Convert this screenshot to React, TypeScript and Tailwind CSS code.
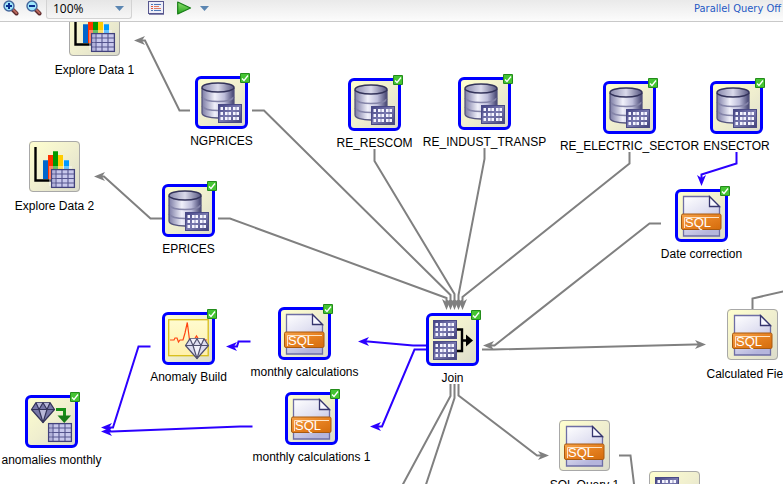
import React from "react";

type IconKind = "table" | "sql" | "explore" | "anomaly" | "create" | "join";

interface FlowNode {
  id: string;
  label?: string;
  icon: IconKind;
  x: number;
  y: number;
  selected?: boolean;
}

const nodes: FlowNode[] = [
  { id: "explore1", label: "Explore Data 1", icon: "explore", x: 69, y: -17 },
  { id: "explore2", label: "Explore Data 2", icon: "explore", x: 29, y: 119 },
  { id: "ngprices", label: "NGPRICES", icon: "table", x: 196, y: 55, selected: true },
  { id: "eprices", label: "EPRICES", icon: "table", x: 163, y: 163, selected: true },
  { id: "rescom", label: "RE_RESCOM", icon: "table", x: 349, y: 57, selected: true },
  { id: "indust", label: "RE_INDUST_TRANSP", icon: "table", x: 459, y: 56, selected: true },
  { id: "electric", label: "RE_ELECTRIC_SECTOR", icon: "table", x: 604, y: 60, selected: true },
  { id: "ensector", label: "ENSECTOR", icon: "table", x: 711, y: 60, selected: true },
  { id: "date", label: "Date correction", icon: "sql", x: 676, y: 168, selected: true },
  { id: "build", label: "Anomaly Build", icon: "anomaly", x: 163, y: 291, selected: true },
  { id: "monthly", label: "monthly calculations", icon: "sql", x: 279, y: 286, selected: true },
  { id: "monthly1", label: "monthly calculations 1", icon: "sql", x: 286, y: 371, selected: true },
  { id: "anomalies", label: "anomalies monthly", icon: "create", x: 26, y: 374, selected: true },
  { id: "join", label: "Join", icon: "join", x: 427, y: 292, selected: true },
  { id: "calculated", label: "Calculated Fields", icon: "sql", x: 727, y: 287 },
  { id: "query1", label: "SQL Query 1", icon: "sql", x: 559, y: 398 },
  { id: "join2", icon: "join", x: 649, y: 449 },
];

const grayEdges = [
  "M190 88.5H179.5L145 18.5H140",
  "M162 196.5H150.5L104 154.5H100",
  "M252 88.5H264L450.5 273V282",
  "M218 196.5H230L446.5 276V282",
  "M374.5 127V139L454.5 272V282",
  "M484.5 126V137L458.5 273V282",
  "M629.5 130V141.5L462.5 275V282",
  "M661 201.5H649.5L494.5 323.5H489",
  "M482 327.5H494L694 322.5H700",
  "M458.5 362V373.5L537 433.5H543",
];

const grayTails = [
  "M450.5 362V374L402 464",
  "M454.5 362V376L425.5 464",
  "M619 433.5H630.5L634 462",
  "M752.5 287V276.5L790 268",
];

const blueEdges = [
  "M736.5 130V141.5L701.5 152.5V158",
  "M426 323.5H413L368 319.5H364",
  "M426 327.5H414.5L382 404.5H376",
  "M250.5 319.5H238.5L237 324.5H232",
  "M150.5 324.5H138.5L113 405.5H107",
  "M252.5 404.5H240L112 409.5H107",
];

function Grid({ x, y, light = false }: { x: number; y: number; light?: boolean }) {
  if (light) {
    return (
      <g transform={`translate(${x} ${y})`}>
        <rect x="0.6" y="0.6" width="22.8" height="17.8" fill="#c8c8ec" stroke="#42427c" strokeWidth="1.3" />
        <path d="M5 1V18M11 1V18M17 1V18M1 5H23M1 9.5H23M1 14H23" stroke="#55558e" strokeWidth="1.1" />
        <path d="M3 1V18" stroke="#9090bd" strokeWidth="0.8" />
      </g>
    );
  }
  return (
    <g transform={`translate(${x} ${y})`}>
      <rect x="0.5" y="0.5" width="23" height="18" fill="url(#gridFill)" stroke="#4a4a86" />
      <g fill="#f5f5ff">
        {[3, 8, 13].map((top) => (
          <React.Fragment key={top}>
            <rect x="2.5" y={top} width="2.5" height="3" />
            <rect x="7" y={top} width="6" height="3" />
            <rect x="15" y={top} width="6" height="3" />
          </React.Fragment>
        ))}
      </g>
      <path d="M10 3V16M18 3V16" stroke="#6c6ca2" strokeWidth="0.8" />
    </g>
  );
}

function Diamond({ x, y, light = false }: { x: number; y: number; light?: boolean }) {
  const stroke = light ? "#50506e" : "#34345a";
  return (
    <g transform={`translate(${x} ${y})`} stroke={stroke} strokeLinejoin="round" strokeWidth="1.2">
      <path d="M5 .7H19L23.5 7.5L12 20.5L.5 7.5Z" fill={light ? "#dcdcf0" : "#7878a8"} />
      <path d="M5 .7L8 7.5L12 .7L16 7.5L19 .7M.5 7.5H23.5M8 7.5L12 20.5L16 7.5" fill={light ? "#f0f0fa" : "#b8b8d8"} />
    </g>
  );
}

function NodeIcon({ kind }: { kind: IconKind }) {
  return (
    <svg viewBox="0 0 51 51" className="block size-[51px]" aria-hidden="true">
      {kind === "table" && (
        <>
          <path d="M6 11V36C6 39 13 41 22 41S38 39 38 36V11Z" fill="url(#metal)" />
          <path d="M6 20C8 23 14 24.5 22 24.5S36 23 38 20M6 29C8 32 14 33.5 22 33.5" fill="none" stroke="#8484a8" strokeWidth="1.5" />
          <path d="M6 11V36C6 39 13 41 22 41S38 39 38 36V11" fill="none" stroke="#55557e" strokeWidth="1.3" />
          <ellipse cx="22" cy="10.5" rx="16" ry="4.5" fill="url(#lid)" stroke="#33335a" strokeWidth="1.5" />
          <Grid x={22} y={27} />
        </>
      )}
      {kind === "sql" && (
        <>
          <path d="M7.5 6.5H33.5L43.5 16.5V46H7.5Z" fill="url(#page)" stroke="#6e6ea5" strokeWidth="1.3" />
          <path d="M33.5 6.5V16.5H43.5Z" fill="#f8f8ff" stroke="#36366e" strokeWidth="1.3" />
          <rect x="5.5" y="24" width="39.5" height="15.5" rx="1.5" fill="url(#band)" stroke="#a85a10" />
          <path d="M8.5 38V27.5H43" fill="none" stroke="#ffe3c2" strokeWidth="1" />
          <text x="9" y="37" fill="#ffffff" className="font-['Liberation_Sans',sans-serif] text-[13px]">SQL</text>
        </>
      )}
      {kind === "explore" && (
        <>
          <path d="M14 19.3H19V38H14Z" fill="#0066cc" />
          <path d="M19 14H24V38H19Z" fill="#ff3300" />
          <path d="M24 10.3H29V38H24Z" fill="#009900" />
          <path d="M29 14H34V38H29Z" fill="#ffcc00" />
          <path d="M35 19.3H40V38H35Z" fill="#0099ff" />
          <path d="M6.5 6V39.5H23" fill="none" stroke="#000000" strokeWidth="2.4" />
          <path d="M20 25H43V28H22V45H20Z" fill="#ffffff" fillOpacity="0.4" />
          <Grid x={22} y={28} light />
        </>
      )}
      {kind === "anomaly" && (
        <>
          <rect x="5.7" y="6.7" width="39.5" height="36" fill="url(#plot)" stroke="#d8bd18" strokeWidth="1.3" />
          <path d="M7 27H11L12 25L14 25L15.5 29L17 27H20L22 20L24.3 9.5L26.5 27H31L33.5 23L36 27H44" fill="none" stroke="#ff4411" strokeWidth="1.2" />
          <Diamond x={22} y={25} light />
        </>
      )}
      {kind === "create" && (
        <>
          <Diamond x={5} y={6} />
          <path d="M30 13.5H38.5V20" fill="none" stroke="#169016" strokeWidth="3" />
          <path d="M31.5 19.5H45L38.3 27Z" fill="#167c16" />
          <Grid x={22} y={27} light />
        </>
      )}
      {kind === "join" && (
        <>
          <Grid x={6} y={6} />
          <Grid x={6} y={27} />
          <path d="M30 15.5H35V37H30M35 26.5H40" fill="none" stroke="#000000" strokeWidth="2.4" />
          <path d="M39 20.5L46 26.5L39 32.5Z" fill="#000000" />
        </>
      )}
    </svg>
  );
}

function DiagramNode({ node }: { node: FlowNode }) {
  return (
    <div className="absolute flex w-[51px] flex-col items-center" style={{ left: node.x, top: node.y }}>
      <div className="relative size-[51px]">
        <div className="size-[51px] overflow-hidden rounded-[4px] bg-linear-to-br from-[#ffffce] via-[#f0efcf] to-[#dbdbcb]">
          <NodeIcon kind={node.icon} />
        </div>
        <div
          className={
            node.selected
              ? "absolute -inset-px rounded-[6px] border-3 border-[#0000ff]"
              : "absolute inset-0 rounded-[4px] border border-[#a8a8a8]"
          }
        />
        {node.selected && (
          <svg viewBox="0 0 10 10" className="absolute -top-1 -right-[3px] size-[10px]" role="img" aria-label="Complete">
            <rect width="10" height="10" rx="1" fill="#238c1b" />
            <rect x="1" y="1" width="8" height="8" fill="#45c433" />
            <path d="M2 5.5L4 7.5L8 2.5" fill="none" stroke="#ffffff" strokeWidth="1.3" />
          </svg>
        )}
      </div>
      {node.label && (
        <span className={`text-[12px] leading-4 whitespace-nowrap ${node.selected ? "mt-[5px]" : "mt-[6px]"}`}>{node.label}</span>
      )}
    </div>
  );
}

function Magnifier({ plus }: { plus: boolean }) {
  return (
    <svg viewBox="0 0 16 16" className="block size-4" aria-hidden="true">
      <path d="M9.5 9.5L13.5 13.5" stroke="#5c2a2c" strokeWidth="4" strokeLinecap="round" />
      <path d="M10.5 10L13.5 13" stroke="#b8675c" strokeWidth="2" strokeLinecap="round" />
      <circle cx="6" cy="6" r="5" fill="#9fe6fa" stroke="#44669c" strokeWidth="1.4" />
      <path d={plus ? "M3 6H9M6 3V9" : "M3 6H9"} stroke="#0b2f90" strokeWidth="2" />
    </svg>
  );
}

function Caret() {
  return (
    <svg viewBox="0 0 9 5" className="block h-[5px] w-[9px]" aria-hidden="true">
      <path d="M0 0H9L4.5 5Z" fill="#5b86b2" />
    </svg>
  );
}

function Toolbar() {
  return (
    <header className="flex h-[22px] shrink-0 items-start border-b border-[#c9c9c9] bg-linear-to-b from-[#eaeaea] to-[#fcfcfc] pr-[2px] pl-[3px] font-['DejaVu_Sans_Condensed','DejaVu_Sans',sans-serif]">
      <button type="button" aria-label="Zoom in"><Magnifier plus /></button>
      <button type="button" aria-label="Zoom out" className="ml-[7px]"><Magnifier plus={false} /></button>
      <div className="relative ml-1 h-[19px] w-[86px]">
        <select
          aria-label="Zoom level"
          defaultValue="100%"
          className="block size-full appearance-none rounded-b-[3px] border border-t-0 border-[#d3d3d3] bg-linear-to-b from-[#e6e6e6] to-[#f6f6f6] pl-[6px] font-['Open_Sans',sans-serif] text-[12px] leading-4 text-black"
        >
          <option>50%</option>
          <option>100%</option>
          <option>200%</option>
        </select>
        <span className="pointer-events-none absolute top-[6px] right-2"><Caret /></span>
      </div>
      <button type="button" aria-label="View log" className="ml-4">
        <svg viewBox="0 0 16 16" className="block size-4" aria-hidden="true">
          <rect x="0.5" y="1.5" width="15" height="12" fill="#eeeef8" stroke="#57578f" />
          <path d="M1 14.5H16" stroke="#8585ad" />
          <path d="M3 4.5H5M3 10.5H5" stroke="#4f79b7" />
          <path d="M3 6.5H5M3 8.5H5" stroke="#e25b38" />
          <path d="M6 4.5H13M6 10.5H13" stroke="#4f79b7" />
          <path d="M6 6.5H11M6 8.5H13" stroke="#e27b5f" />
        </svg>
      </button>
      <button type="button" aria-label="Run" className="ml-[13px]">
        <svg viewBox="0 0 15 16" className="block h-4 w-[15px]" aria-hidden="true">
          <path d="M.7 2L13.5 8L.7 14Z" fill="url(#run)" stroke="#167c16" strokeWidth="1.2" strokeLinejoin="round" />
        </svg>
      </button>
      <button type="button" aria-label="Run options" className="mt-[6px] ml-2"><Caret /></button>
      <a href="#parallel-query" className="ml-auto text-[11px] leading-[18px] whitespace-nowrap text-[#2559c4]">Parallel Query Off</a>
    </header>
  );
}

function Definitions() {
  return (
    <defs>
      <linearGradient id="metal">
        <stop offset="0" stopColor="#7c7ca5" />
        <stop offset="0.4" stopColor="#f0f0fa" />
        <stop offset="0.7" stopColor="#bdbdda" />
        <stop offset="1" stopColor="#42426f" />
      </linearGradient>
      <linearGradient id="lid">
        <stop offset="0" stopColor="#8888ac" />
        <stop offset="0.5" stopColor="#dadaeb" />
        <stop offset="1" stopColor="#555580" />
      </linearGradient>
      <linearGradient id="gridFill" x1="0" y1="0" x2="1" y2="1">
        <stop offset="0" stopColor="#424282" />
        <stop offset="0.5" stopColor="#7a7ab0" />
        <stop offset="1" stopColor="#404078" />
      </linearGradient>
      <linearGradient id="page" x1="0" y1="0" x2="0.5" y2="1">
        <stop offset="0" stopColor="#ffffff" />
        <stop offset="0.5" stopColor="#e2e2f2" />
        <stop offset="1" stopColor="#b5b5dc" />
      </linearGradient>
      <linearGradient id="band" x1="0" y1="0" x2="1" y2="1">
        <stop offset="0" stopColor="#f5a24a" />
        <stop offset="0.5" stopColor="#e78222" />
        <stop offset="1" stopColor="#d46c0c" />
      </linearGradient>
      <linearGradient id="plot" x1="0" y1="0" x2="0" y2="1">
        <stop offset="0" stopColor="#fffbcf" />
        <stop offset="1" stopColor="#fff0ac" />
      </linearGradient>
      <linearGradient id="run" x1="0" y1="0" x2="0" y2="1">
        <stop offset="0" stopColor="#8fe06e" />
        <stop offset="1" stopColor="#25a51d" />
      </linearGradient>
      <marker id="grayHead" markerUnits="userSpaceOnUse" markerWidth="12" markerHeight="10" refX="6" refY="5" orient="auto">
        <path d="M1 .5L12 5L1 9.5L4 5Z" fill="#808080" />
      </marker>
      <marker id="blueHead" markerUnits="userSpaceOnUse" markerWidth="12" markerHeight="10" refX="6" refY="5" orient="auto">
        <path d="M1 .5L12 5L1 9.5L4 5Z" fill="#2b00ff" />
      </marker>
    </defs>
  );
}

export default function App() {
  return (
    <div className="flex h-screen flex-col overflow-hidden bg-white text-black">
      <Toolbar />
      <main className="relative min-h-0 flex-1 overflow-hidden font-['Liberation_Sans',Arial,sans-serif]">
        <svg className="absolute inset-0 size-full" aria-hidden="true">
          <Definitions />
          <g fill="none" stroke="#808080" strokeWidth="2">
            {grayEdges.map((d) => <path key={d} d={d} markerEnd="url(#grayHead)" />)}
            {grayTails.map((d) => <path key={d} d={d} />)}
          </g>
          <g fill="none" stroke="#2b00ff" strokeWidth="2">
            {blueEdges.map((d) => <path key={d} d={d} markerEnd="url(#blueHead)" />)}
          </g>
        </svg>
        {nodes.map((node) => <DiagramNode key={node.id} node={node} />)}
      </main>
    </div>
  );
}
